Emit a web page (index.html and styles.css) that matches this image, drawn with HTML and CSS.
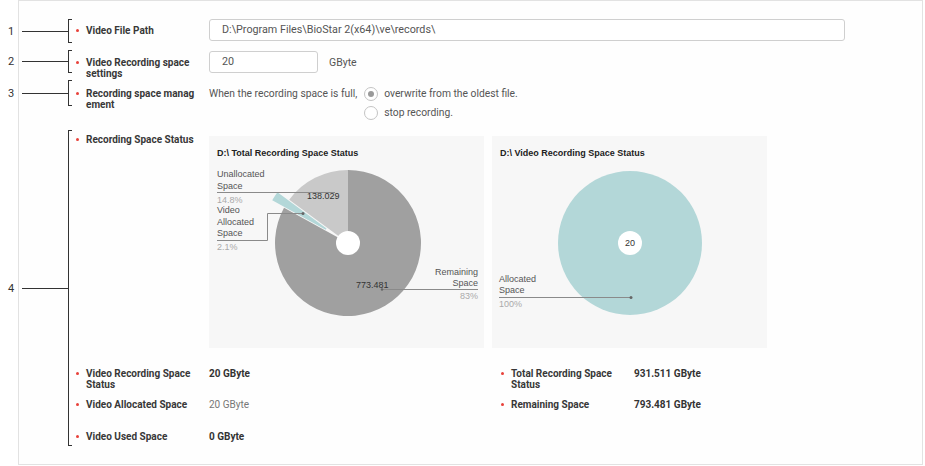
FILE: index.html
```html
<!DOCTYPE html>
<html lang="en">
<head>
<meta charset="utf-8">
<title>Video settings</title>
<link rel="stylesheet" href="styles.css">
</head>
<body>
<div class="panel">
  <div class="row r1">
    <div class="callout c1"><span class="num">1</span><span class="lead"></span><span class="brace"></span></div>
    <div class="label">Video File Path</div>
    <div class="field"><div class="input wide">D:\Program Files\BioStar 2(x64)\ve\records\</div></div>
  </div>

  <div class="row r2">
    <div class="callout c2"><span class="num">2</span><span class="lead"></span><span class="brace"></span></div>
    <div class="label">Video Recording space settings</div>
    <div class="field"><div class="input small">20</div><span class="unit">GByte</span></div>
  </div>

  <div class="row r3">
    <div class="callout c3"><span class="num">3</span><span class="lead"></span><span class="brace"></span></div>
    <div class="label">Recording space manag ement</div>
    <div class="field mgmt">
      <span class="when">When the recording space is full,</span>
      <div class="radios">
        <div class="opt"><span class="radio on"></span><span>overwrite from the oldest file.</span></div>
        <div class="opt"><span class="radio"></span><span>stop recording.</span></div>
      </div>
    </div>
  </div>

  <div class="sect4">
    <div class="callout c4"><span class="num">4</span><span class="lead"></span><span class="brace"></span></div>
    <div class="row r4">
      <div class="label">Recording Space Status</div>
      <div class="charts">
        <div class="chart">
          <svg width="275" height="212" viewBox="0 0 275 212">
            <text class="ctitle" x="8" y="20">D:\ Total Recording Space Status</text>
            <path class="s-dark" d="M139 107 L139 34 A73 73 0 1 1 75.03 71.83 Z"/>
            <path class="s-light" d="M139 107 L80.24 63.68 A73 73 0 0 1 139 34 Z"/>
            <path class="s-teal" transform="translate(-11.8 -7.5)" d="M75.03 71.83 A73 73 0 0 1 80.24 63.68 L129.34 99.88 A12 12 0 0 0 128.48 101.22 Z"/>
            <circle class="hole" cx="139" cy="107" r="12"/>
            <polyline class="leader" points="8,56.5 126,56.5"/>
            <polyline class="leader" points="8,104.5 58.5,104.5 58.5,77.5 94,77.5"/>
            <circle class="ldot" cx="94" cy="77.5" r="1.5"/>
            <polyline class="leader" points="173,153.5 269,153.5"/>
            <circle class="ldot" cx="173" cy="153.5" r="1.2"/>
            <text class="clab" x="8" y="41">Unallocated</text>
            <text class="clab" x="8" y="53">Space</text>
            <text class="cpct" x="8" y="67">14.8%</text>
            <text class="clab" x="8" y="77">Video</text>
            <text class="clab" x="8" y="89">Allocated</text>
            <text class="clab" x="8" y="100">Space</text>
            <text class="cpct" x="8" y="114">2.1%</text>
            <text class="cval" x="98" y="63">138.029</text>
            <text class="cval" x="147" y="152">773.481</text>
            <text class="clab end" x="269" y="139">Remaining</text>
            <text class="clab end" x="269" y="150">Space</text>
            <text class="cpct end" x="269" y="163">83%</text>
          </svg>
        </div>
        <div class="chart">
          <svg width="275" height="212" viewBox="0 0 275 212">
            <text class="ctitle" x="8" y="20">D:\ Video Recording Space Status</text>
            <circle class="s-teal" cx="138" cy="107" r="72"/>
            <circle class="hole" cx="138" cy="107" r="12"/>
            <text class="cval mid" x="138" y="110">20</text>
            <polyline class="leader" points="7,161.5 139,161.5"/>
            <circle class="ldot" cx="139" cy="161.5" r="1.5"/>
            <text class="clab" x="7" y="146">Allocated</text>
            <text class="clab" x="7" y="157">Space</text>
            <text class="cpct" x="7" y="171">100%</text>
          </svg>
        </div>
      </div>
    </div>

    <div class="stats">
      <div class="label">Video Recording Space Status</div>
      <div class="val">20 GByte</div>
      <div class="label rlabel">Total Recording Space Status</div>
      <div class="val">931.511 GByte</div>

      <div class="label">Video Allocated Space</div>
      <div class="val dim">20 GByte</div>
      <div class="label rlabel">Remaining Space</div>
      <div class="val">793.481 GByte</div>

      <div class="label">Video Used Space</div>
      <div class="val">0 GByte</div>
      <div></div>
      <div></div>
    </div>
  </div>
</div>
</body>
</html>
```

FILE: styles.css
```css
* { box-sizing: border-box; }
html, body { margin: 0; padding: 0; background: #ffffff; }
body {
  font-family: Roboto, "Liberation Sans", Arial, sans-serif;
  font-size: 10.5px;
  color: #555;
  width: 925px;
  height: 466px;
  overflow: hidden;
}
.panel {
  margin-left: 18px;
  width: 905px;
  height: 465px;
  border: 1px solid #e2e2e2;
  background: #fefefe;
  padding-top: 18px;
}
.row {
  position: relative;
  display: grid;
  grid-template-columns: 190px 1fr;
}
.label {
  display: flex;
  align-items: flex-start;
  padding-left: 57px;
  font-size: 10px;
  font-weight: 700;
  color: #383838;
  line-height: 11px;
}
.label::before {
  content: "";
  flex: none;
  width: 3px;
  height: 3px;
  margin-top: 4px;
  margin-right: 7px;
  border-radius: 50%;
  background: #e8413a;
}
.r1 .label, .r2 .label { padding-top: 6px; }
.r2 { margin-top: 10px; }
.r3 { margin-top: 8px; }
.r3 .label { padding-top: 1px; }

.field { display: flex; align-items: center; align-self: start; }
.input {
  height: 22px;
  border: 1px solid #cfcfcf;
  border-radius: 3px;
  background: #fff;
  padding-left: 12px;
  line-height: 20px;
  font-size: 10.75px;
  color: #555;
}
.input.wide { width: 636px; }
.input.small { width: 109px; }
.unit { margin-left: 11px; color: #555; }

.mgmt { align-items: flex-start; }
.when { line-height: 14px; margin-right: 7px; font-size: 10.3px; }
.radios { display: flex; flex-direction: column; gap: 5px; }
.opt { display: flex; align-items: center; gap: 6px; line-height: 14px; font-size: 10.3px; }
.radio {
  width: 14px;
  height: 14px;
  border: 1px solid #c4c4c4;
  border-radius: 50%;
  background: #fff;
  display: flex;
  align-items: center;
  justify-content: center;
}
.radio.on::after {
  content: "";
  width: 6px;
  height: 6px;
  border-radius: 50%;
  background: #9a9a9a;
}

.sect4 { position: relative; margin-top: 14px; }
.r4 .label { padding-top: 0; }
.charts { display: flex; gap: 8px; margin-top: 2px; }
.chart { width: 275px; height: 212px; background: #f7f7f7; }
.chart svg { display: block; }

.ctitle { font-family: "Liberation Sans", Arial, sans-serif; font-size: 9px; font-weight: 700; fill: #222; }
.clab { font-family: "Liberation Sans", Arial, sans-serif; font-size: 9px; fill: #555; }
.cpct { font-family: "Liberation Sans", Arial, sans-serif; font-size: 9px; fill: #aaa; }
.cval { font-family: "Liberation Sans", Arial, sans-serif; font-size: 9px; fill: #333; }
.end { text-anchor: end; }
.mid { text-anchor: middle; }
.s-dark { fill: #a0a0a0; }
.s-light { fill: #c9c9c9; }
.s-teal { fill: #b3d7d8; }
.hole { fill: #fff; }
.leader { fill: none; stroke: #8a8a8a; stroke-width: 1; }
.ldot { fill: #666; }

.stats {
  display: grid;
  grid-template-columns: 190px 283px 142px 1fr;
  grid-template-rows: 31px 32px 11px;
  margin-top: 20px;
}
.rlabel { padding-left: 9px; }
.val { font-size: 10px; font-weight: 700; color: #333; line-height: 11px; }
.val.dim { font-weight: 400; color: #777; }

.callout {
  position: absolute;
  left: -19px;
  width: 72px;
  display: flex;
  align-items: center;
}
.callout .num {
  width: 22px;
  text-align: center;
  font-size: 11px;
  color: #333;
  font-weight: 400;
}
.callout .lead {
  width: 46px;
  height: 1px;
  background: #333;
}
.callout .brace {
  align-self: stretch;
  width: 4px;
  border: 1px solid #333;
  border-right: none;
}
.c1 { top: 0; bottom: -2px; }
.c2 { top: -1px; bottom: 6px; }
.c3 { top: -7px; bottom: 14px; }
.c4 { top: -4px; bottom: -4px; }
```
